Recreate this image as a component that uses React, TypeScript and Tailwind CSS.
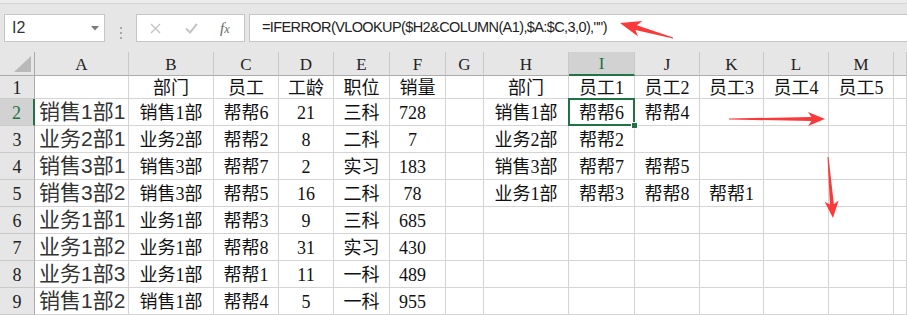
import React from "react";

const serif = "font-['Liberation_Serif','Noto_Sans_CJK_SC',serif]";
const sans = "font-['Liberation_Sans','Noto_Sans_CJK_SC',sans-serif]";

const letters = ["A", "B", "C", "D", "E", "F", "G", "H", "I", "J", "K", "L", "M", ""];

const rows: string[][] = [
  ["", "部门", "员工", "工龄", "职位", "销量", "", "部门", "员工1", "员工2", "员工3", "员工4", "员工5", ""],
  ["销售1部1", "销售1部", "帮帮6", "21", "三科", "728", "", "销售1部", "帮帮6", "帮帮4", "", "", "", ""],
  ["业务2部1", "业务2部", "帮帮2", "8", "二科", "7", "", "业务2部", "帮帮2", "", "", "", "", ""],
  ["销售3部1", "销售3部", "帮帮7", "2", "实习", "183", "", "销售3部", "帮帮7", "帮帮5", "", "", "", ""],
  ["销售3部2", "销售3部", "帮帮5", "16", "二科", "78", "", "业务1部", "帮帮3", "帮帮8", "帮帮1", "", "", ""],
  ["业务1部1", "业务1部", "帮帮3", "9", "三科", "685", "", "", "", "", "", "", "", ""],
  ["业务1部2", "业务1部", "帮帮8", "31", "实习", "430", "", "", "", "", "", "", "", ""],
  ["业务1部3", "业务1部", "帮帮1", "11", "一科", "489", "", "", "", "", "", "", "", ""],
  ["销售1部2", "销售1部", "帮帮4", "5", "一科", "955", "", "", "", "", "", "", "", ""],
];

// arrow polygon: thin tail widening into a swept-back head
function arrowPoints(tx: number, ty: number, hx: number, hy: number, hl: number, hw: number, sw: number) {
  const len = Math.hypot(tx - hx, ty - hy);
  const dx = (tx - hx) / len;
  const dy = (ty - hy) / len;
  const px = -dy;
  const py = dx;
  const pts = [
    [hx, hy],
    [hx + dx * hl + px * hw, hy + dy * hl + py * hw],
    [hx + dx * hl * 0.8 + px * sw, hy + dy * hl * 0.8 + py * sw],
    [tx + px * 0.5, ty + py * 0.5],
    [tx - px * 0.5, ty - py * 0.5],
    [hx + dx * hl * 0.8 - px * sw, hy + dy * hl * 0.8 - py * sw],
    [hx + dx * hl - px * hw, hy + dy * hl - py * hw],
  ];
  return pts.map((p) => p.join(",")).join(" ");
}

function FormulaBar() {
  return (
    <div className="h-[52px] bg-[#e6e6e6]">
      <div className="h-[4px] bg-[#ececec] border-b border-[#d6d6d6]" />
      <div className="flex pt-[10px] h-[48px]">
        <div className="ml-[4px] w-[101px] h-[28px] bg-white border border-[#c6c6c6] flex items-center justify-between pl-[7px] pr-[5px]">
          <span className={`${sans} text-[16px] text-[#333]`}>I2</span>
          <svg width="8" height="5" viewBox="0 0 8 5">
            <polygon points="0,0 8,0 4,4.5" fill="#7a7a7a" />
          </svg>
        </div>
        <div className="w-[31px] flex flex-col items-center justify-center gap-[3px]">
          <span className="w-[2px] h-[2px] bg-[#a8a8a8]" />
          <span className="w-[2px] h-[2px] bg-[#a8a8a8]" />
          <span className="w-[2px] h-[2px] bg-[#a8a8a8]" />
        </div>
        <div className="w-[109px] h-[28px] bg-white border border-[#c6c6c6] flex items-center">
          <svg className="ml-[13px]" width="11" height="11" viewBox="0 0 11 11">
            <path d="M1 1 L10 10 M10 1 L1 10" stroke="#c4c4c4" strokeWidth="1.4" />
          </svg>
          <svg className="ml-[24px]" width="13" height="11" viewBox="0 0 13 11">
            <path d="M1 5.5 L5 9.5 L12 1" stroke="#c4c4c4" strokeWidth="2" fill="none" />
          </svg>
          <span className="ml-[22px] font-['Liberation_Serif',serif] italic text-[15px] text-[#666] leading-none">
            f<span className="text-[12px]">x</span>
          </span>
        </div>
        <div className="ml-[4px] flex-1 h-[28px] bg-white border-y border-l border-[#c6c6c6] flex items-center pl-[12px]">
          <span className={`${sans} text-[14.5px] tracking-[-0.6px] text-[#222] whitespace-nowrap`}>
            =IFERROR(VLOOKUP($H2&amp;COLUMN(A1),$A:$C,3,0),"")
          </span>
        </div>
      </div>
    </div>
  );
}

function Sheet() {
  return (
    <div className="grid grid-cols-[35px_94px_85px_65px_55px_56px_56px_38px_85px_66px_65px_64px_65px_65px_1fr] grid-rows-[24px_23px_repeat(8,27px)]">
      <div className="bg-[#e6e6e6] border-r border-b border-[#ababab] relative">
        <svg className="absolute right-[3px] bottom-[3px]" width="17" height="16" viewBox="0 0 17 16">
          <polygon points="17,0 17,16 0,16" fill="#b9b9b9" />
        </svg>
      </div>
      {letters.map((l, i) => (
        <div
          key={"h" + i}
          className={`${serif} text-[17px] flex items-center justify-center pt-[2px] border-r border-[#c9c9c9] ${
            l === "I"
              ? "bg-[#d2d2d2] text-[#217346] border-b-2 border-b-[#217346]"
              : "bg-[#e6e6e6] text-[#222] border-b border-b-[#ababab]"
          }`}
        >
          {l}
        </div>
      ))}
      {rows.map((r, ri) => (
        <React.Fragment key={"r" + ri}>
          <div
            className={`${serif} text-[18px] flex items-center justify-center pt-[3px] border-b border-[#c9c9c9] ${
              ri === 1
                ? "bg-[#d2d2d2] text-[#217346] border-r-2 border-r-[#217346]"
                : "bg-[#e6e6e6] text-[#222] border-r border-r-[#ababab]"
            }`}
          >
            {ri + 1}
          </div>
          {r.map((v, ci) => (
            <div
              key={ci}
              className={`relative border-r border-b border-[#d4d4d4] flex items-center whitespace-nowrap ${
                ci === 0
                  ? `${sans} text-[21px] pl-[4px] text-[#333]`
                  : `${serif} text-[18px] text-[#111] justify-center pt-[3px] ${ci === 5 && ri > 0 ? "pr-[10px]" : ""}`
              }`}
            >
              {v}
              {ri === 1 && ci === 8 && (
                <div className="absolute z-10 -left-[1px] -top-[1px] -right-[1px] -bottom-[1px] border-2 border-[#217346]">
                  <div className="absolute -right-[5px] -bottom-[5px] w-[7px] h-[7px] bg-[#217346] border border-white" />
                </div>
              )}
            </div>
          ))}
        </React.Fragment>
      ))}
    </div>
  );
}

export default function App() {
  return (
    <div className="relative w-[907px] h-[315px] overflow-hidden bg-white">
      <FormulaBar />
      <Sheet />
      <svg className="absolute left-0 top-0 pointer-events-none" width="907" height="315">
        <polygon points={arrowPoints(673, 38, 620, 23, 21, 8, 2.5)} fill="#fa3a3a" />
        <polygon points={arrowPoints(729, 119, 825, 119, 17, 7, 2)} fill="#fa3a3a" />
        <polygon points={arrowPoints(828, 157, 833, 218, 17, 7, 2)} fill="#fa3a3a" />
      </svg>
    </div>
  );
}
